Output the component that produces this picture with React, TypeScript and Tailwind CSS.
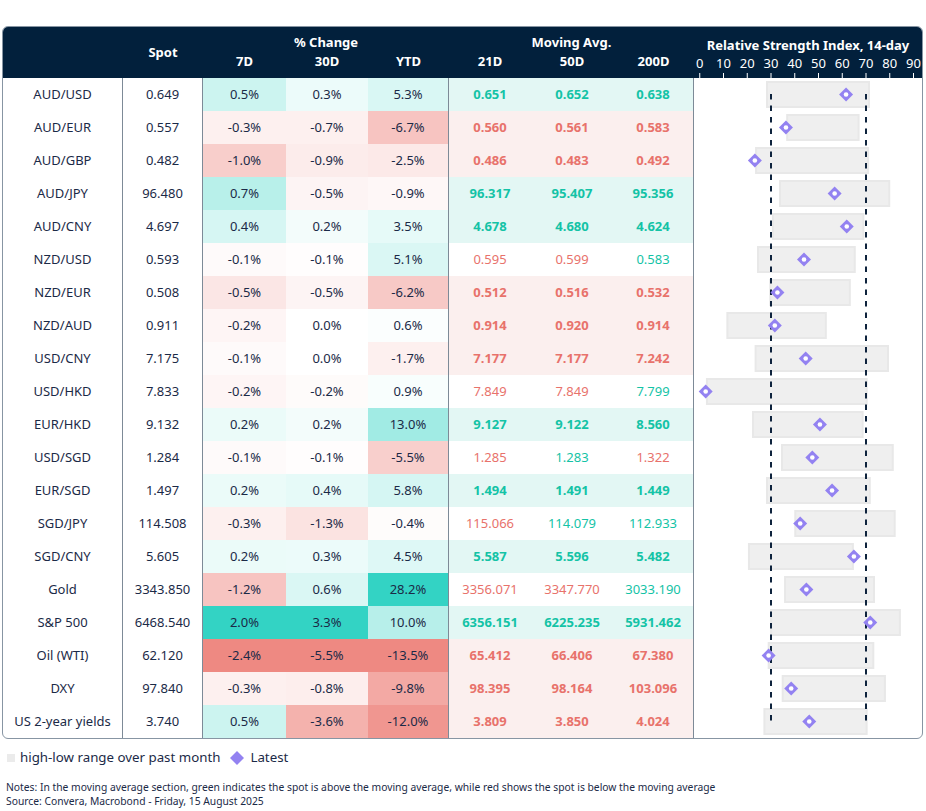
import React from "react";

type Row = {
  name: string;
  spot: string;
  chg: [number, number, number];
  ma: [string, string, string];
  sign: string; // g / r per moving-average cell
  rsi: [number, number, number]; // low, high, latest
};

const rows: Row[] = [
  { name: "AUD/USD", spot: "0.649", chg: [0.5, 0.3, 5.3], ma: ["0.651", "0.652", "0.638"], sign: "ggg", rsi: [27.9, 71.7, 61.6] },
  { name: "AUD/EUR", spot: "0.557", chg: [-0.3, -0.7, -6.7], ma: ["0.560", "0.561", "0.583"], sign: "rrr", rsi: [36.4, 67.3, 36.3] },
  { name: "AUD/GBP", spot: "0.482", chg: [-1.0, -0.9, -2.5], ma: ["0.486", "0.483", "0.492"], sign: "rrr", rsi: [23.3, 71.3, 23.2] },
  { name: "AUD/JPY", spot: "96.480", chg: [0.7, -0.5, -0.9], ma: ["96.317", "95.407", "95.356"], sign: "ggg", rsi: [33.4, 80.2, 56.8] },
  { name: "AUD/CNY", spot: "4.697", chg: [0.4, 0.2, 3.5], ma: ["4.678", "4.680", "4.624"], sign: "ggg", rsi: [30.4, 69.3, 61.9] },
  { name: "NZD/USD", spot: "0.593", chg: [-0.1, -0.1, 5.1], ma: ["0.595", "0.599", "0.583"], sign: "rrg", rsi: [24.1, 65.7, 43.9] },
  { name: "NZD/EUR", spot: "0.508", chg: [-0.5, -0.5, -6.2], ma: ["0.512", "0.516", "0.532"], sign: "rrr", rsi: [29.3, 63.6, 32.7] },
  { name: "NZD/AUD", spot: "0.911", chg: [-0.2, 0.0, 0.6], ma: ["0.914", "0.920", "0.914"], sign: "rrr", rsi: [11.2, 53.5, 31.6] },
  { name: "USD/CNY", spot: "7.175", chg: [-0.1, 0.0, -1.7], ma: ["7.177", "7.177", "7.242"], sign: "rrr", rsi: [23.1, 79.7, 44.6] },
  { name: "USD/HKD", spot: "7.833", chg: [-0.2, -0.2, 0.9], ma: ["7.849", "7.849", "7.799"], sign: "rrg", rsi: [2.6, 70.7, 2.5] },
  { name: "EUR/HKD", spot: "9.132", chg: [0.2, 0.2, 13.0], ma: ["9.127", "9.122", "8.560"], sign: "ggg", rsi: [22.0, 69.0, 50.6] },
  { name: "USD/SGD", spot: "1.284", chg: [-0.1, -0.1, -5.5], ma: ["1.285", "1.283", "1.322"], sign: "rgr", rsi: [34.2, 81.7, 47.4] },
  { name: "EUR/SGD", spot: "1.497", chg: [0.2, 0.4, 5.8], ma: ["1.494", "1.491", "1.449"], sign: "ggg", rsi: [27.9, 72.0, 55.7] },
  { name: "SGD/JPY", spot: "114.508", chg: [-0.3, -1.3, -0.4], ma: ["115.066", "114.079", "112.933"], sign: "rgg", rsi: [39.8, 82.5, 42.3] },
  { name: "SGD/CNY", spot: "5.605", chg: [0.2, 0.3, 4.5], ma: ["5.587", "5.596", "5.482"], sign: "ggg", rsi: [20.3, 64.9, 64.9] },
  { name: "Gold", spot: "3343.850", chg: [-1.2, 0.6, 28.2], ma: ["3356.071", "3347.770", "3033.190"], sign: "rrg", rsi: [35.5, 73.8, 44.9] },
  { name: "S&P 500", spot: "6468.540", chg: [2.0, 3.3, 10.0], ma: ["6356.151", "6225.235", "5931.462"], sign: "ggg", rsi: [29.6, 84.7, 71.8] },
  { name: "Oil (WTI)", spot: "62.120", chg: [-2.4, -5.5, -13.5], ma: ["65.412", "66.406", "67.380"], sign: "rrr", rsi: [28.6, 73.5, 29.0] },
  { name: "DXY", spot: "97.840", chg: [-0.3, -0.8, -9.8], ma: ["98.395", "98.164", "103.096"], sign: "rrr", rsi: [34.5, 78.4, 38.5] },
  { name: "US 2-year yields", spot: "3.740", chg: [0.5, -3.6, -12.0], ma: ["3.809", "3.850", "4.024"], sign: "rrr", rsi: [26.8, 70.7, 46.1] },
];

const GREEN = [51, 211, 196];
const RED = [238, 137, 130];

// per-column extremes for the heat colours
const maxPos = [0, 1, 2].map((c) => Math.max(...rows.map((r) => r.chg[c])));
const minNeg = [0, 1, 2].map((c) => Math.min(...rows.map((r) => r.chg[c])));

function heat(v: number, col: number) {
  const end = v >= 0 ? GREEN : RED;
  const t = v >= 0 ? v / maxPos[col] : v / minNeg[col];
  const ch = end.map((e) => Math.round(255 - t * (255 - e)));
  return `rgb(${ch[0]}, ${ch[1]}, ${ch[2]})`;
}

const fmt = (v: number) => `${v.toFixed(1)}%`;
const rx = (v: number) => 5.75 + 2.375 * v;
const ROW_H = 33;

function RsiChart() {
  const h = rows.length * ROW_H;
  return (
    <svg width="228" height={h} className="block">
      {rows.map((r, i) => (
        <rect
          key={r.name}
          x={rx(r.rsi[0]) + 1}
          y={i * ROW_H + 4}
          width={rx(r.rsi[1]) - rx(r.rsi[0]) - 2}
          height={25}
          fill="#efefef"
          stroke="#e8e8e8"
          strokeWidth="2"
        />
      ))}
      {[30, 70].map((v) => (
        <line
          key={v}
          x1={rx(v)}
          x2={rx(v)}
          y1={16}
          y2={h - 17}
          stroke="#0e233d"
          strokeWidth="2"
          strokeDasharray="5.5 6"
        />
      ))}
      {rows.map((r, i) => {
        const cx = rx(r.rsi[2]);
        const cy = i * ROW_H + 16.5;
        return (
          <g key={r.name + "-d"}>
            <polygon
              points={`${cx},${cy - 7} ${cx + 7},${cy} ${cx},${cy + 7} ${cx - 7},${cy}`}
              fill="#9382f1"
            />
            <circle cx={cx} cy={cy} r="2.3" fill="#ffffff" />
          </g>
        );
      })}
    </svg>
  );
}

function RsiHeader() {
  const ticks = [0, 10, 20, 30, 40, 50, 60, 70, 80, 90];
  return (
    <div className="flex w-[228px] flex-col">
      <div className="pt-[11px] text-center text-[13px] font-bold leading-[14px] text-white">
        Relative Strength Index, 14-day
      </div>
      <svg width="228" height="26" className="mt-auto block">
        {ticks.map((t) => (
          <g key={t}>
            <text
              x={rx(t)}
              y="16"
              textAnchor="middle"
              fill="#ffffff"
              fontSize="13"
              fontFamily="'Noto Sans', sans-serif"
            >
              {t}
            </text>
            <line x1={rx(t)} x2={rx(t)} y1="21" y2="26" stroke="#ffffff" strokeWidth="1" />
          </g>
        ))}
      </svg>
    </div>
  );
}

export default function App() {
  return (
    <div className="min-h-[811px] bg-white pl-[2px] pt-[26px] font-['Noto_Sans',sans-serif] text-[#1b2a47]">
      <div className="w-[921px] overflow-hidden rounded-md border border-[#8795a3] bg-white">
        {/* header */}
        <div className="flex h-[51px] bg-[#02203c] text-white">
          <div className="grid w-[691px] grid-cols-[120px_80px_83px_82px_81px_82px_82px_81px] grid-rows-[18px_20px] pt-[7px] text-[13px] font-bold">
            <div className="col-start-2 row-span-2 row-start-1 flex items-center justify-center">Spot</div>
            <div className="col-span-3 col-start-3 row-start-1 flex items-center justify-center">% Change</div>
            <div className="col-span-3 col-start-6 row-start-1 flex items-center justify-center">Moving Avg.</div>
            {["7D", "30D", "YTD", "21D", "50D", "200D"].map((h, i) => (
              <div
                key={h}
                className={`row-start-2 flex items-center justify-center ${
                  ["col-start-3", "col-start-4", "col-start-5", "col-start-6", "col-start-7", "col-start-8"][i]
                }`}
              >
                {h}
              </div>
            ))}
          </div>
          <RsiHeader />
        </div>

        {/* body */}
        <div className="flex">
          <div className="grid w-[691px] auto-rows-[33px] grid-cols-[120px_80px_83px_82px_81px_82px_82px_81px] text-[13px]">
            {rows.map((r) => {
              const same = r.sign === "ggg" || r.sign === "rrr";
              const maBg = r.sign === "ggg" ? "bg-[#e3f7f4]" : r.sign === "rrr" ? "bg-[#fbefee]" : "bg-white";
              return (
                <React.Fragment key={r.name}>
                  <div className="flex items-center justify-center border-r border-[#7d8a97] whitespace-nowrap">
                    {r.name}
                  </div>
                  <div className="flex items-center justify-center border-r border-[#7d8a97]">{r.spot}</div>
                  {r.chg.map((v, c) => (
                    <div
                      key={c}
                      className={`flex items-center justify-center ${c === 2 ? "border-r border-[#7d8a97]" : ""}`}
                      style={{ backgroundColor: heat(v, c) }}
                    >
                      {fmt(v)}
                    </div>
                  ))}
                  {r.ma.map((m, c) => (
                    <div
                      key={"m" + c}
                      className={`flex items-center justify-center ${maBg} ${same ? "font-bold" : ""} ${
                        r.sign[c] === "g" ? "text-[#14c3a6]" : "text-[#e8726b]"
                      } ${c === 2 ? "border-r border-[#7d8a97]" : ""}`}
                    >
                      {m}
                    </div>
                  ))}
                </React.Fragment>
              );
            })}
          </div>
          <RsiChart />
        </div>
      </div>

      {/* legend */}
      <div className="mt-[9px] flex h-[20px] items-center pl-[5px] text-[13.3px]">
        <span className="mr-[5px] h-[8px] w-[8px] bg-[#ebebeb]" />
        <span>high-low range over past month</span>
        <svg width="16" height="16" className="ml-[9px] mr-[5px]">
          <polygon points="8,1 15,8 8,15 1,8" fill="#9382f1" />
        </svg>
        <span>Latest</span>
      </div>

      {/* notes */}
      <div className="mt-[12px] pl-[4px] text-[10.3px] leading-[14px] text-[#1b2a47]">
        <div>
          Notes: In the moving average section, green indicates the spot is above the moving average, while red shows the spot is below the moving average
        </div>
        <div>Source: Convera, Macrobond - Friday, 15 August 2025</div>
      </div>
    </div>
  );
}
